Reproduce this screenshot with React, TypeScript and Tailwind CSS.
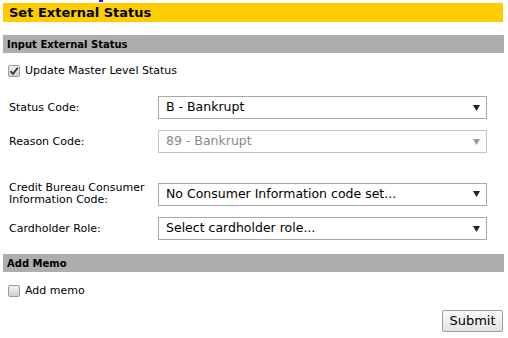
const font = "font-['DejaVu_Sans',Verdana,sans-serif]";

function SectionBar({ title }: { title: string }) {
  return (
    <div className="flex h-[18px] items-center bg-[#adadad] pl-[4px] text-[10px] font-bold text-black">
      {title}
    </div>
  );
}

function Check({ checked }: { checked?: boolean }) {
  return (
    <span className="relative inline-flex h-[12px] w-[12px] items-center justify-center rounded-[2px] border border-[#9a9a9a] bg-gradient-to-b from-[#f2f2f2] to-[#d0d0d0]">
      {checked && (
        <svg width="10" height="10" viewBox="0 0 10 10" className="absolute">
          <path d="M1.5 5.2 L4 7.8 L8.8 1.8" fill="none" stroke="#333" strokeWidth="1.8" />
        </svg>
      )}
    </span>
  );
}

function Select({ value, disabled }: { value: string; disabled?: boolean }) {
  return (
    <div
      className={`flex h-[23px] w-[329px] items-center justify-between border bg-white pl-[7px] pr-[6px] text-[12.5px] ${
        disabled ? "border-[#c4c4c4] text-[#8a8a8a]" : "border-[#a9a9a9] text-black"
      }`}
    >
      <span>{value}</span>
      <svg width="7" height="6" viewBox="0 0 7 6">
        <path d="M0 0 H7 L3.5 6 Z" fill={disabled ? "#9a9a9a" : "#222"} />
      </svg>
    </div>
  );
}

function Row({ label, children, className }: { label: React.ReactNode; children: React.ReactNode; className?: string }) {
  return (
    <div className={`flex items-center ${className ?? ""}`}>
      <div className="w-[155px] pl-[6px] text-[11px] leading-[12px] text-black">{label}</div>
      {children}
    </div>
  );
}

export default function App() {
  return (
    <div className={`h-[338px] w-[508px] bg-white ${font}`}>
      <div className="h-[3px] pl-[99px]">
        <div className="h-[2px] w-[4px] bg-[#1a1aff]" />
      </div>
      <div className="mx-[3px] w-[500px]">
        <div className="flex h-[19px] items-center bg-[#ffcc00] pl-[6px] text-[13px] font-bold text-black">
          Set External Status
        </div>
      </div>
      <div className="mx-[3px] mt-[13px] w-[501px]">
        <SectionBar title="Input External Status" />
        <label className="mt-[12px] flex h-[12px] items-center gap-[5px] pl-[5px] text-[11px] leading-[12px] text-black">
          <Check checked />
          Update Master Level Status
        </label>
        <Row label="Status Code:" className="mt-[19px]">
          <Select value="B - Bankrupt" />
        </Row>
        <Row label="Reason Code:" className="mt-[11px]">
          <Select value="89 - Bankrupt" disabled />
        </Row>
        <Row
          label={
            <>
              Credit Bureau Consumer
              <br />
              Information Code:
            </>
          }
          className="mt-[29px]"
        >
          <Select value="No Consumer Information code set..." />
        </Row>
        <Row label="Cardholder Role:" className="mt-[11px]">
          <Select value="Select cardholder role..." />
        </Row>
        <div className="mt-[14px]">
          <SectionBar title="Add Memo" />
        </div>
        <label className="mt-[13px] flex h-[12px] items-center gap-[5px] pl-[5px] text-[11px] leading-[12px] text-black">
          <Check />
          Add memo
        </label>
        <div className="mt-[13px] flex justify-end pr-[1px]">
          <button className="h-[22px] w-[61px] rounded-[2px] border border-[#9d9d9d] bg-gradient-to-b from-[#fafafa] to-[#e2e2e2] text-[13px] leading-[20px] text-black">
            Submit
          </button>
        </div>
      </div>
    </div>
  );
}
